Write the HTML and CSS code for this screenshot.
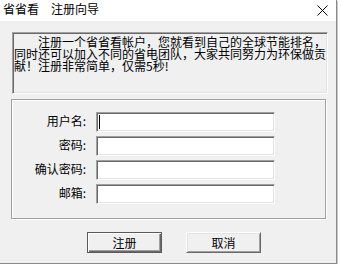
FILE: index.html
```html
<!DOCTYPE html>
<html lang="zh-CN">
<head>
<meta charset="utf-8">
<title>注册向导</title>
<link rel="stylesheet" href="styles.css">
</head>
<body>
<div class="window">
  <div class="titlebar">
    <span class="title">省省看</span><span class="title title-sub">注册向导</span>
    <svg class="close" width="11" height="11" viewBox="0 0 11 11"><path d="M0.5 0.5L10.5 10.5M10.5 0.5L0.5 10.5" stroke="#000" stroke-width="1" fill="none"/></svg>
  </div>
  <div class="msg">注册一个省省看帐户，您就看到自己的全球节能排名，同时还可以加入不同的省电团队，大家共同努力为环保做贡献！注册非常简单，仅需5秒!</div>
  <div class="group">
    <div class="form">
      <span class="label">用户名:</span><div class="input"><span class="caret"></span></div>
      <span class="label">密码:</span><div class="input"></div>
      <span class="label">确认密码:</span><div class="input"></div>
      <span class="label">邮箱:</span><div class="input"></div>
    </div>
  </div>
  <div class="buttons">
    <button class="btn btn-default">注册</button>
    <button class="btn">取消</button>
  </div>
</div>
</body>
</html>
```
FILE: styles.css
```css
html, body {
  margin: 0;
  padding: 0;
  background: #ffffff;
}
body {
  font-family: "Noto Sans CJK SC", "Microsoft YaHei", sans-serif;
  font-size: 12px;
  color: #000;
}
.window {
  width: 336px;
  height: 263px;
  background: #f0f0f0;
  border-right: 1px solid #8a8a8a;
  border-bottom: 1px solid #8a8a8a;
  box-shadow: 1px 1px 0 #c8c8c8;
  display: flex;
  flex-direction: column;
}
.titlebar {
  height: 21px;
  flex: none;
  background: #ffffff;
  display: flex;
  align-items: center;
  padding-left: 3px;
}
.title {
  font-size: 12px;
  line-height: 12px;
  margin-top: -3px;
}
.title-sub {
  margin-left: 12px;
}
.close {
  margin-left: auto;
  margin-right: 8px;
  margin-top: -1px;
}
.msg {
  flex: none;
  margin: 11px 0 0 12px;
  width: 312px;
  height: 57px;
  padding: 3px 1px 0 1px;
  border: 1px solid;
  border-color: #a0a0a0 #ffffff #ffffff #a0a0a0;
  box-shadow: inset 1px 1px 0 #696969, inset -1px -1px 0 #e3e3e3;
  line-height: 12px;
  text-indent: 24px;
  overflow: hidden;
}
.group {
  flex: none;
  margin: 5px 0 0 11px;
  width: 313px;
  height: 106px;
  padding: 12px 0 0 0;
  border: 1px solid #a0a0a0;
  box-shadow: 1px 1px 0 #ffffff, inset 1px 1px 0 #ffffff;
}
.form {
  display: grid;
  grid-template-columns: 74px 179px;
  grid-auto-rows: 20px;
  column-gap: 10px;
  row-gap: 4px;
}
.label {
  text-align: right;
  line-height: 18px;
}
.input {
  box-sizing: border-box;
  height: 20px;
  background: #ffffff;
  border: 1px solid;
  border-color: #a0a0a0 #ffffff #ffffff #a0a0a0;
  box-shadow: inset 1px 1px 0 #696969, inset -1px -1px 0 #e3e3e3;
  padding: 2px 0 0 2px;
}
.caret {
  display: block;
  width: 1px;
  height: 14px;
  background: #000;
}
.buttons {
  flex: none;
  display: flex;
  gap: 24px;
  margin: 13px 0 0 87px;
}
.btn {
  box-sizing: border-box;
  width: 75px;
  height: 21px;
  margin: 0;
  padding: 0;
  font-family: "Noto Sans CJK SC", "Microsoft YaHei", sans-serif;
  font-size: 12px;
  line-height: 12px;
  color: #000;
  background: #f0f0f0;
  border: 1px solid;
  border-color: #ffffff #696969 #696969 #ffffff;
  box-shadow: inset 1px 1px 0 #e3e3e3, inset -1px -1px 0 #a0a0a0;
}
.btn-default {
  border-color: #5a5a5a;
  box-shadow: inset 1px 1px 0 #ffffff, inset -1px -1px 0 #696969, inset -2px -2px 0 #a0a0a0;
}
```
